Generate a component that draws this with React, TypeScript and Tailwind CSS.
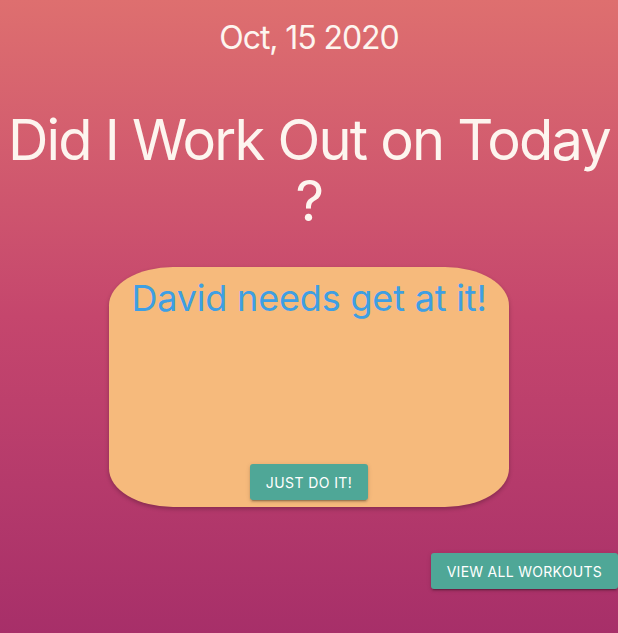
export default function App() {
  return (
    <div
      className="min-h-[633px] w-full flex flex-col items-center bg-gradient-to-b from-[#de6f6f] via-[#c5466d] to-[#a72f69]"
      style={{ fontFamily: "Inter, 'Liberation Sans', sans-serif" }}
    >
      {/* Date */}
      <div className="pt-[14px] text-[32px] tracking-[-0.034em] text-[#fdf5ef] text-center">
        Oct, 15 2020
      </div>

      {/* Title */}
      <h1 className="mt-[48px] w-full px-1 text-center text-[56px] leading-[61px] tracking-[-0.032em] font-normal text-[#fdf5ef]">
        Did I Work Out on Today ?
      </h1>

      {/* Card */}
      <div className="mt-[35px] w-[400px] h-[240px] bg-[#f6ba7c] rounded-[16%] shadow-[0_2px_4px_rgba(0,0,0,0.25)] flex flex-col items-center pt-[4px] pb-[7px]">
        <div className="text-[36px] tracking-[-0.005em] text-[#3e9fe3] text-center">
          David needs get at it!
        </div>
        <div className="flex-1" />
        <button className="h-[36px] px-4 bg-[#4fa797] text-white text-[14px] font-normal uppercase tracking-[0.4px] rounded-[3px] shadow-[0_3px_1px_-2px_rgba(0,0,0,0.2),0_2px_2px_0_rgba(0,0,0,0.14),0_1px_5px_0_rgba(0,0,0,0.12)]">
          Just do it!
        </button>
      </div>

      {/* Footer button */}
      <div className="w-full flex justify-end mt-[46px]">
        <button className="h-[36px] px-4 bg-[#4fa797] text-white text-[14px] font-normal uppercase tracking-[0.28px] rounded-[3px] shadow-[0_3px_1px_-2px_rgba(0,0,0,0.2),0_2px_2px_0_rgba(0,0,0,0.14),0_1px_5px_0_rgba(0,0,0,0.12)]">
          View all workouts
        </button>
      </div>
    </div>
  );
}
